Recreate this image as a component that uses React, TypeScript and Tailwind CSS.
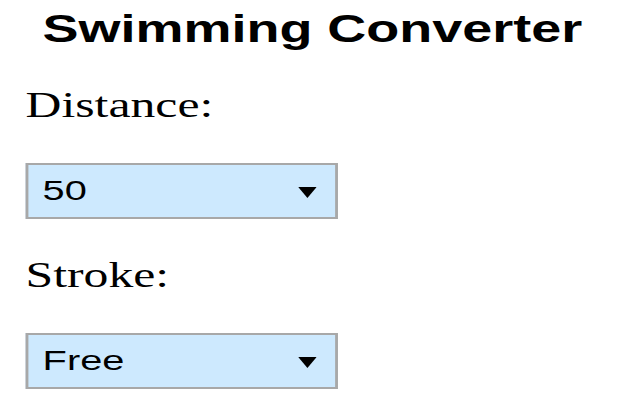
import { useState } from 'react'

const DISTANCES = ['50', '100', '200', '400', '800', '1500']
const STROKES = ['Free', 'Back', 'Breast', 'Fly', 'IM']

function Picker({ value, options, onChange }: { value: string; options: string[]; onChange: (v: string) => void }) {
  return (
    <div className="relative w-[220px] h-[56px] border-2 border-[#a8a8a8] bg-[#cde9fe]">
      <select
        value={value}
        onChange={e => onChange(e.target.value)}
        className="appearance-none w-full h-full bg-transparent pl-[10px] pr-8 text-[28px] text-black outline-none font-['Liberation_Sans',Arial,sans-serif]"
      >
        {options.map(o => <option key={o} value={o}>{o}</option>)}
      </select>
      <svg className="pointer-events-none absolute right-[13px] top-[22px]" width="13" height="11" viewBox="0 0 13 11">
        <polygon points="0,0 13,0 6.5,11" fill="#000" />
      </svg>
    </div>
  )
}

export default function App() {
  const [distance, setDistance] = useState('50')
  const [stroke, setStroke] = useState('Free')

  return (
    <div className="w-[640px] h-[400px] overflow-hidden bg-white">
      <div className="w-[451px] origin-top-left scale-x-[1.42] pl-[18px]">
        <h1 className="mt-[9px] text-center pr-[29px] text-[38px] leading-[40px] font-bold text-black font-['Liberation_Sans',Arial,sans-serif]">
          Swimming Converter
        </h1>
        <div className="mt-[37px] text-[35px] leading-[40px] text-black font-['Liberation_Serif','Times_New_Roman',serif]">Distance:</div>
        <div className="mt-[37px]">
          <Picker value={distance} options={DISTANCES} onChange={setDistance} />
        </div>
        <div className="mt-[37px] text-[35px] leading-[40px] text-black font-['Liberation_Serif','Times_New_Roman',serif]">Stroke:</div>
        <div className="mt-[37px]">
          <Picker value={stroke} options={STROKES} onChange={setStroke} />
        </div>
      </div>
    </div>
  )
}
